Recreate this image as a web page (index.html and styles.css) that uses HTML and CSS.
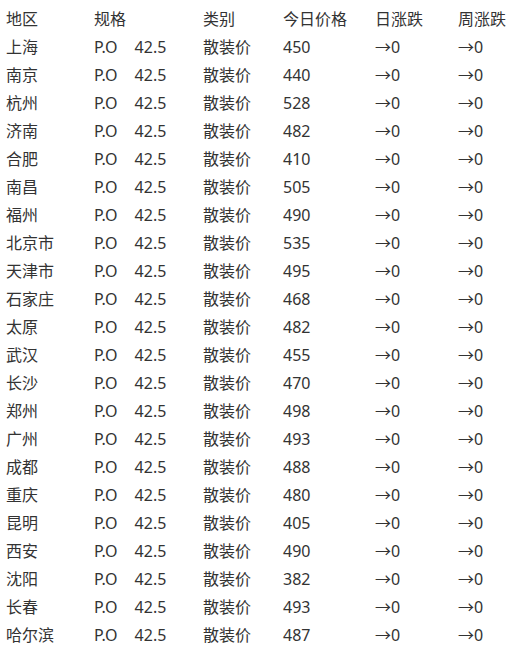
FILE: index.html
```html
<!DOCTYPE html>
<html lang="zh">
<head>
<meta charset="utf-8">
<link rel="stylesheet" href="styles.css">
</head>
<body>
<div class="table">
  <div class="row head"><span>地区</span><span>规格</span><span>类别</span><span>今日价格</span><span>日涨跌</span><span>周涨跌</span></div>
  <div class="row"><span>上海</span><span>P.O<i class="gap">42.5</i></span><span>散装价</span><span>450</span><span>→0</span><span>→0</span></div>
  <div class="row"><span>南京</span><span>P.O<i class="gap">42.5</i></span><span>散装价</span><span>440</span><span>→0</span><span>→0</span></div>
  <div class="row"><span>杭州</span><span>P.O<i class="gap">42.5</i></span><span>散装价</span><span>528</span><span>→0</span><span>→0</span></div>
  <div class="row"><span>济南</span><span>P.O<i class="gap">42.5</i></span><span>散装价</span><span>482</span><span>→0</span><span>→0</span></div>
  <div class="row"><span>合肥</span><span>P.O<i class="gap">42.5</i></span><span>散装价</span><span>410</span><span>→0</span><span>→0</span></div>
  <div class="row"><span>南昌</span><span>P.O<i class="gap">42.5</i></span><span>散装价</span><span>505</span><span>→0</span><span>→0</span></div>
  <div class="row"><span>福州</span><span>P.O<i class="gap">42.5</i></span><span>散装价</span><span>490</span><span>→0</span><span>→0</span></div>
  <div class="row"><span>北京市</span><span>P.O<i class="gap">42.5</i></span><span>散装价</span><span>535</span><span>→0</span><span>→0</span></div>
  <div class="row"><span>天津市</span><span>P.O<i class="gap">42.5</i></span><span>散装价</span><span>495</span><span>→0</span><span>→0</span></div>
  <div class="row"><span>石家庄</span><span>P.O<i class="gap">42.5</i></span><span>散装价</span><span>468</span><span>→0</span><span>→0</span></div>
  <div class="row"><span>太原</span><span>P.O<i class="gap">42.5</i></span><span>散装价</span><span>482</span><span>→0</span><span>→0</span></div>
  <div class="row"><span>武汉</span><span>P.O<i class="gap">42.5</i></span><span>散装价</span><span>455</span><span>→0</span><span>→0</span></div>
  <div class="row"><span>长沙</span><span>P.O<i class="gap">42.5</i></span><span>散装价</span><span>470</span><span>→0</span><span>→0</span></div>
  <div class="row"><span>郑州</span><span>P.O<i class="gap">42.5</i></span><span>散装价</span><span>498</span><span>→0</span><span>→0</span></div>
  <div class="row"><span>广州</span><span>P.O<i class="gap">42.5</i></span><span>散装价</span><span>493</span><span>→0</span><span>→0</span></div>
  <div class="row"><span>成都</span><span>P.O<i class="gap">42.5</i></span><span>散装价</span><span>488</span><span>→0</span><span>→0</span></div>
  <div class="row"><span>重庆</span><span>P.O<i class="gap">42.5</i></span><span>散装价</span><span>480</span><span>→0</span><span>→0</span></div>
  <div class="row"><span>昆明</span><span>P.O<i class="gap">42.5</i></span><span>散装价</span><span>405</span><span>→0</span><span>→0</span></div>
  <div class="row"><span>西安</span><span>P.O<i class="gap">42.5</i></span><span>散装价</span><span>490</span><span>→0</span><span>→0</span></div>
  <div class="row"><span>沈阳</span><span>P.O<i class="gap">42.5</i></span><span>散装价</span><span>382</span><span>→0</span><span>→0</span></div>
  <div class="row"><span>长春</span><span>P.O<i class="gap">42.5</i></span><span>散装价</span><span>493</span><span>→0</span><span>→0</span></div>
  <div class="row"><span>哈尔滨</span><span>P.O<i class="gap">42.5</i></span><span>散装价</span><span>487</span><span>→0</span><span>→0</span></div>
</div>
</body>
</html>
```
FILE: styles.css
```css
html, body {
  margin: 0;
  padding: 0;
  background: #fff;
}
body {
  font-family: "Noto Sans", "Noto Sans CJK SC", sans-serif;
  font-size: 16px;
  color: #333;
}
.table {
  padding: 5px 0 0 6px;
}
.row {
  display: grid;
  grid-template-columns: 88px 109px 80px 92px 83px 1fr;
  height: 28px;
  line-height: 28px;
  white-space: nowrap;
}
.gap {
  font-style: normal;
  margin-left: 17px;
}
```
